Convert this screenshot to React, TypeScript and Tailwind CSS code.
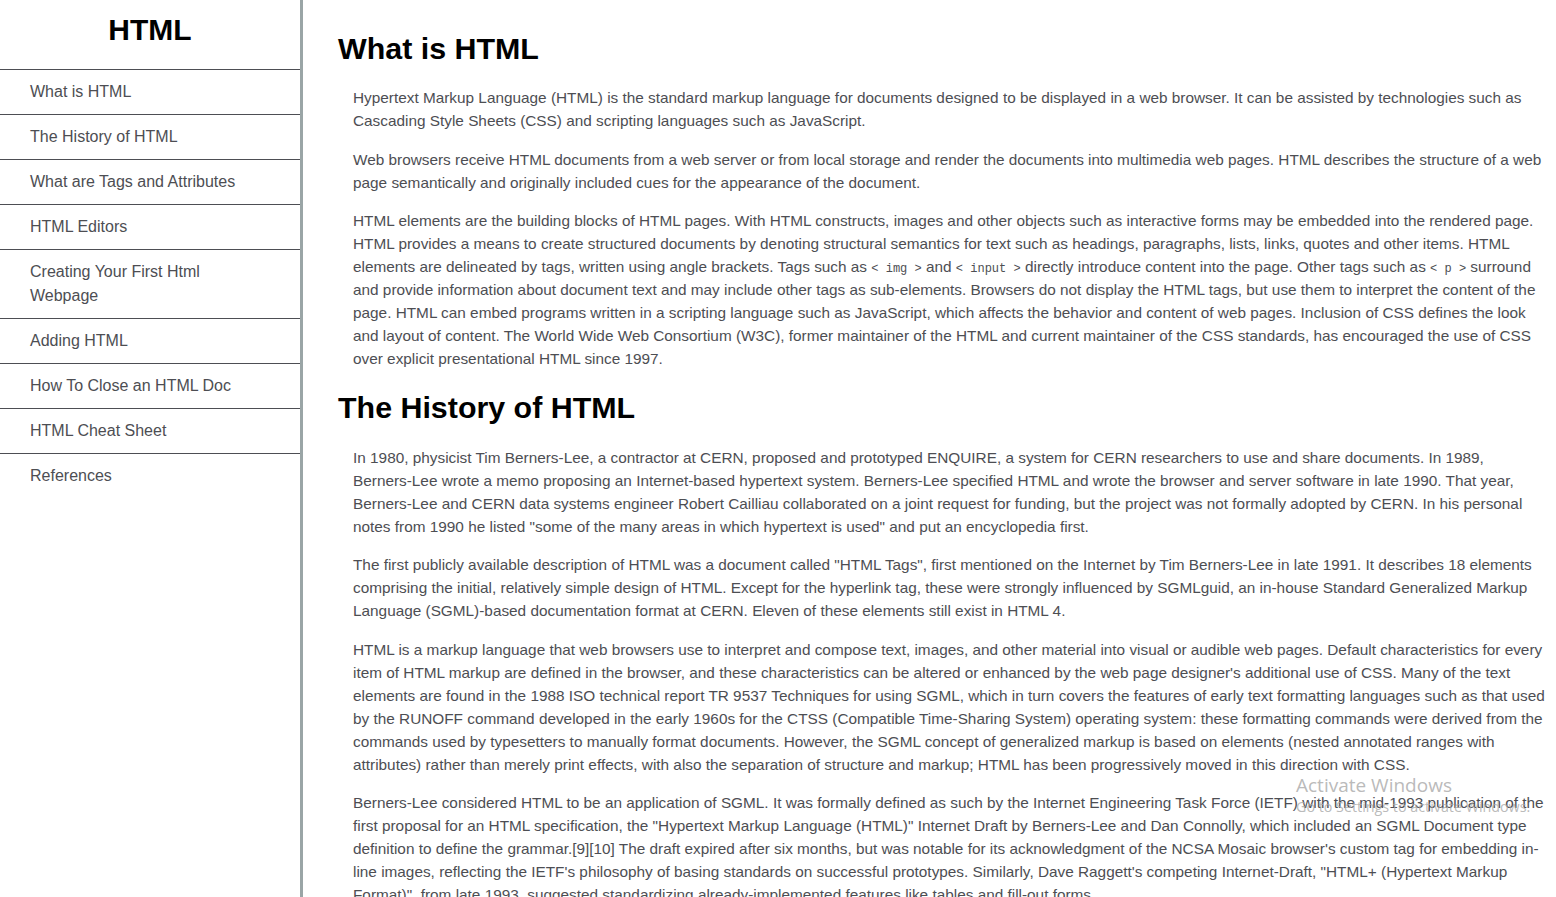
import React from "react";

const navItems = [
  "What is HTML",
  "The History of HTML",
  "What are Tags and Attributes",
  "HTML Editors",
  "Creating Your First Html Webpage",
  "Adding HTML",
  "How To Close an HTML Doc",
  "HTML Cheat Sheet",
  "References",
];

const Code: React.FC<{ children: React.ReactNode }> = ({ children }) => (
  <code className="font-['Liberation_Mono',monospace] text-[12px] leading-none">{children}</code>
);

const P: React.FC<{ children: React.ReactNode }> = ({ children }) => (
  <p className="ml-[15px] mb-[15.5px] leading-[23px]">{children}</p>
);

const App: React.FC = () => {
  return (
    <div className="relative flex h-screen w-full overflow-hidden bg-white font-['Liberation_Sans',Arial,sans-serif] text-[#4d4e53]">
      <nav className="w-[303px] shrink-0 border-r-[3px] border-[#9aa5a6] text-[16px]">
        <header className="h-[69px] pt-[12px] text-center text-[30px] font-bold leading-[36px] text-black">
          HTML
        </header>
        <ul>
          {navItems.map((item) => (
            <li
              key={item}
              className="border-t border-[#4d4e53] py-[10px] pl-[30px] pr-[40px] leading-[24px]"
            >
              <a href="#">{item}</a>
            </li>
          ))}
        </ul>
      </nav>

      <main className="flex-1 overflow-hidden pl-[35px] pr-[10px] pt-[30px] text-[15.35px]">
        <section>
          <h2 className="mb-[20px] text-[30.4px] font-bold leading-[36px] text-black">
            What is HTML
          </h2>
          <P>
            Hypertext Markup Language (HTML) is the standard markup language for
            documents designed to be displayed in a web browser. It can be
            assisted by technologies such as Cascading Style Sheets (CSS) and
            scripting languages such as JavaScript.
          </P>
          <P>
            Web browsers receive HTML documents from a web server or from local
            storage and render the documents into multimedia web pages. HTML
            describes the structure of a web page semantically and originally
            included cues for the appearance of the document.
          </P>
          <P>
            HTML elements are the building blocks of HTML pages. With HTML
            constructs, images and other objects such as interactive forms may be
            embedded into the rendered page. HTML provides a means to create
            structured documents by denoting structural semantics for text such
            as headings, paragraphs, lists, links, quotes and other items. HTML
            elements are delineated by tags, written using angle brackets. Tags
            such as <Code>&lt; img &gt;</Code> and <Code>&lt; input &gt;</Code>{" "}
            directly introduce content into the page. Other tags such as{" "}
            <Code>&lt; p &gt;</Code> surround and provide information about
            document text and may include other tags as sub-elements. Browsers do
            not display the HTML tags, but use them to interpret the content of
            the page. HTML can embed programs written in a scripting language
            such as JavaScript, which affects the behavior and content of web
            pages. Inclusion of CSS defines the look and layout of content. The
            World Wide Web Consortium (W3C), former maintainer of the HTML and
            current maintainer of the CSS standards, has encouraged the use of
            CSS over explicit presentational HTML since 1997.
          </P>
        </section>

        <section>
          <h2 className="mb-[21px] mt-[18.5px] text-[30.4px] font-bold leading-[36px] text-black">
            The History of HTML
          </h2>
          <P>
            In 1980, physicist Tim Berners-Lee, a contractor at CERN, proposed and
            prototyped ENQUIRE, a system for CERN researchers to use and share
            documents. In 1989, Berners-Lee wrote a memo proposing an
            Internet-based hypertext system. Berners-Lee specified HTML and wrote
            the browser and server software in late 1990. That year, Berners-Lee
            and CERN data systems engineer Robert Cailliau collaborated on a
            joint request for funding, but the project was not formally adopted
            by CERN. In his personal notes from 1990 he listed "some of the many
            areas in which hypertext is used" and put an encyclopedia first.
          </P>
          <P>
            The first publicly available description of HTML was a document
            called "HTML Tags", first mentioned on the Internet by Tim
            Berners-Lee in late 1991. It describes 18 elements comprising the
            initial, relatively simple design of HTML. Except for the hyperlink
            tag, these were strongly influenced by SGMLguid, an in-house Standard
            Generalized Markup Language (SGML)-based documentation format at
            CERN. Eleven of these elements still exist in HTML 4.
          </P>
          <P>
            HTML is a markup language that web browsers use to interpret and
            compose text, images, and other material into visual or audible web
            pages. Default characteristics for every item of HTML markup are
            defined in the browser, and these characteristics can be altered or
            enhanced by the web page designer's additional use of CSS. Many of
            the text elements are found in the 1988 ISO technical report TR 9537
            Techniques for using SGML, which in turn covers the features of early
            text formatting languages such as that used by the RUNOFF command
            developed in the early 1960s for the CTSS (Compatible Time-Sharing
            System) operating system: these formatting commands were derived from
            the commands used by typesetters to manually format documents.
            However, the SGML concept of generalized markup is based on elements
            (nested annotated ranges with attributes) rather than merely print
            effects, with also the separation of structure and markup; HTML has
            been progressively moved in this direction with CSS.
          </P>
          <P>
            Berners-Lee considered HTML to be an application of SGML. It was
            formally defined as such by the Internet Engineering Task Force
            (IETF) with the mid-1993 publication of the first proposal for an
            HTML specification, the "Hypertext Markup Language (HTML)" Internet
            Draft by Berners-Lee and Dan Connolly, which included an SGML
            Document type definition to define the grammar.[9][10] The draft
            expired after six months, but was notable for its acknowledgment of
            the NCSA Mosaic browser's custom tag for embedding in-line images,
            reflecting the IETF's philosophy of basing standards on successful
            prototypes. Similarly, Dave Raggett's competing Internet-Draft,
            "HTML+ (Hypertext Markup Format)", from late 1993, suggested
            standardizing already-implemented features like tables and fill-out
            forms.
          </P>
        </section>
      </main>

      <div className="pointer-events-none absolute left-[1296px] top-[772px] font-['Open_Sans',sans-serif] text-[#a8a8a8]/80">
        <div className="text-[19px] leading-[26px]">Activate Windows</div>
        <div className="text-[14.3px] leading-[18px]">Go to Settings to activate Windows.</div>
      </div>
    </div>
  );
};

export default App;
